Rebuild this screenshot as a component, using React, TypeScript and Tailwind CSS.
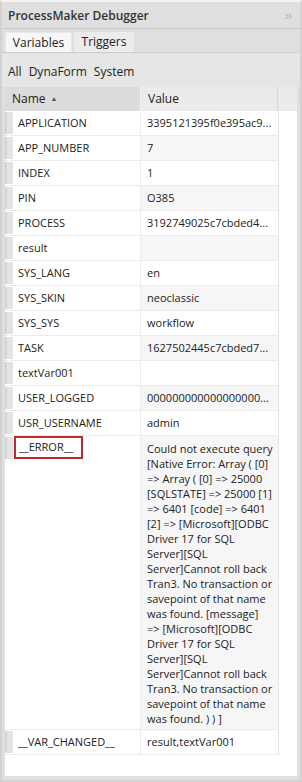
import { ChevronsRight } from "lucide-react";

interface VarRow {
    name: string;
    value: string | string[];
    marked?: boolean;
}

const errorLines = [
    "Could not execute query",
    "[Native Error: Array ( [0]",
    "=> Array ( [0] => 25000",
    "[SQLSTATE] => 25000 [1]",
    "=> 6401 [code] => 6401",
    "[2] => [Microsoft][ODBC",
    "Driver 17 for SQL",
    "Server][SQL",
    "Server]Cannot roll back",
    "Tran3. No transaction or",
    "savepoint of that name",
    "was found. [message]",
    "=> [Microsoft][ODBC",
    "Driver 17 for SQL",
    "Server][SQL",
    "Server]Cannot roll back",
    "Tran3. No transaction or",
    "savepoint of that name",
    "was found. ) ) ]",
];

const rows: VarRow[] = [
    { name: "APPLICATION", value: "3395121395f0e395ac9..." },
    { name: "APP_NUMBER", value: "7" },
    { name: "INDEX", value: "1" },
    { name: "PIN", value: "O385" },
    { name: "PROCESS", value: "3192749025c7cbded4..." },
    { name: "result", value: "" },
    { name: "SYS_LANG", value: "en" },
    { name: "SYS_SKIN", value: "neoclassic" },
    { name: "SYS_SYS", value: "workflow" },
    { name: "TASK", value: "1627502445c7cbded7..." },
    { name: "textVar001", value: "" },
    { name: "USER_LOGGED", value: "000000000000000000..." },
    { name: "USR_USERNAME", value: "admin" },
    { name: "__ERROR__", value: errorLines, marked: true },
    { name: "__VAR_CHANGED__", value: "result,textVar001" },
];

const GridRow = ({ row, odd }: { row: VarRow; odd: boolean }) => {
    const multi = Array.isArray(row.value);
    return (
        <div className="flex border-b border-[#ececec]">
            <div className="w-[8px] shrink-0">
                <div className="h-[22px] mt-[1px] bg-[#e3e3e3] border-l-2 border-[#d4d4d4]" />
            </div>
            <div className="w-[128px] shrink-0 flex items-start border-r border-[#ececec]">
                {row.marked ? (
                    <div className="h-[23px] w-[69px] ml-[1px] border-2 border-[#c1272d] flex items-center pl-[3px]">
                        {row.name}
                    </div>
                ) : (
                    <div className="h-[24px] flex items-center pl-[5px]">{row.name}</div>
                )}
            </div>
            <div className={"w-[137px] shrink-0 pl-[6px] " + (odd ? "bg-[#f6f6f6]" : "bg-white")}>
                {multi ? (
                    <div className="pt-[5px] pb-[3px] leading-[15px]">
                        {(row.value as string[]).map((l, i) => (
                            <div key={i} className="whitespace-nowrap">{l}</div>
                        ))}
                    </div>
                ) : (
                    <div className="h-[24px] flex items-center whitespace-nowrap">{row.value}</div>
                )}
            </div>
        </div>
    );
};

export default function App() {
    return (
        <div className="w-[302px] h-[782px] bg-[#dfdfdf] border-2 border-[#d2d2d2] border-t-[#f4f4f4] flex flex-col text-[#222] text-[11px] font-['Open_Sans',sans-serif]">
            <div className="h-[27px] shrink-0 flex items-center justify-between pl-[6px] pr-[6px] pt-[2px] border-b border-[#c9c9c9]">
                <span className="text-[12px] font-semibold text-[#333]">ProcessMaker Debugger</span>
                <ChevronsRight className="w-[11px] h-[11px] text-[#9a9a9a]" strokeWidth={2} />
            </div>
            <div className="h-[24px] shrink-0 flex items-end gap-[2px] pl-[3px] mr-[2px] border-b border-[#cacaca]">
                <div className="h-[20px] w-[67px] flex items-center justify-center bg-[#f7f7f7] border border-b-0 border-[#e9e9e9] text-[12px]">
                    Variables
                </div>
                <div className="h-[20px] w-[60px] flex items-center justify-center bg-[#ececec] text-[12px]">
                    Triggers
                </div>
            </div>
            <div className="h-[34px] shrink-0 flex items-center gap-[7px] pl-[6px] pt-[4px] bg-[#e6e6e6] text-[12px]">
                <span>All</span>
                <span>DynaForm</span>
                <span>System</span>
            </div>
            <div className="flex-1 mx-[3px] mb-[4px] bg-white flex flex-col">
                <div className="h-[24px] flex shrink-0 text-[12px]">
                    <div className="w-[136px] bg-[#dcdcdc] flex items-center pl-[7px] gap-[5px] border-r border-[#f2f2f2]">
                        Name
                        <span className="text-[7px] text-[#555]">▲</span>
                    </div>
                    <div className="w-[137px] bg-[#ebebeb] flex items-center pl-[7px] border-r border-[#d8d8d8]">
                        Value
                    </div>
                    <div className="flex-1 bg-[#ebebeb]" />
                </div>
                <div className="flex">
                    <div className="flex flex-col">
                        {rows.map((r, i) => (
                            <GridRow key={r.name} row={r} odd={i % 2 === 1} />
                        ))}
                    </div>
                    <div className="flex-1 border-l border-[#e4e4e4]" />
                </div>
            </div>
        </div>
    );
}
